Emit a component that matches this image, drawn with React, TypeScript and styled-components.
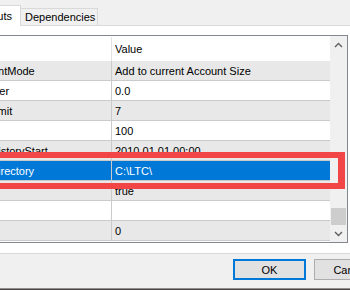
import React from "react";
import styled, { createGlobalStyle, css } from "styled-components";

const GlobalStyle = createGlobalStyle`
  html, body { margin: 0; padding: 0; background: #f0f0f0; }
  body {
    font-family: "Liberation Sans", Arial, sans-serif;
    font-size: 11px;
    color: #000;
  }
`;

const Window = styled.div`
  position: relative;
  width: 350px;
  height: 290px;
  overflow: hidden;
  background: #f0f0f0;
  display: flex;
  flex-direction: column;
`;

const TabStrip = styled.div`
  display: flex;
  align-items: flex-end;
  height: 25px;
  margin-left: -27px;
  flex-shrink: 0;
`;

const Tab = styled.div<{ $active?: boolean }>`
  box-sizing: border-box;
  display: flex;
  align-items: center;
  border: 1px solid #d9d9d9;
  border-bottom: none;
  white-space: nowrap;
  line-height: 1;
  ${(p) =>
    p.$active
      ? css`
          width: 48px;
          height: 21px;
          justify-content: center;
          background: #fff;
          position: relative;
          z-index: 1;
          margin-bottom: -1px;
        `
      : css`
          width: 78px;
          height: 17px;
          padding-left: 4px;
          background: #f0f0f0;
          margin-left: -1px;
        `}
`;

const Panel = styled.div`
  box-sizing: border-box;
  height: 229px;
  margin: 0 -1px 0 -96px;
  border: 1px solid #d9d9d9;
  background: #fff;
  padding: 9px 2px 10px 0;
  flex-shrink: 0;
`;

const Grid = styled.div`
  box-sizing: border-box;
  height: 208px;
  border: 1px solid #828790;
  display: flex;
`;

const TableArea = styled.div`
  flex: 1;
  background: #fff;
  overflow: hidden;
`;

const HeaderRow = styled.div`
  display: grid;
  grid-template-columns: 206px 1fr;
  height: 25px;
  background: #fff;
`;

const HeaderCell = styled.div<{ $first?: boolean }>`
  display: flex;
  align-items: center;
  padding-left: ${(p) => (p.$first ? "4px" : "3px")};
  margin-top: 1px;
  ${(p) => p.$first && css`border-right: 1px solid #e3e3e3;`}
`;

const Row = styled.div<{ $alt?: boolean; $selected?: boolean }>`
  box-sizing: border-box;
  display: grid;
  grid-template-columns: 206px 1fr;
  height: 20px;
  border-bottom: 1px solid #cacaca;
  background: ${(p) => (p.$selected ? "#0078d7" : p.$alt ? "#e8e8e8" : "#fff")};
  color: ${(p) => (p.$selected ? "#fff" : "#000")};
`;

const Cell = styled.div<{ $first?: boolean }>`
  display: flex;
  align-items: center;
  white-space: nowrap;
  overflow: hidden;
  padding-left: ${(p) => (p.$first ? "4px" : "3px")};
  ${(p) => p.$first && css`border-right: 1px solid #cacaca;`}
`;

const ScrollBar = styled.div`
  width: 17px;
  background: #f0f0f0;
  display: flex;
  flex-direction: column;
  flex-shrink: 0;
`;

const ArrowButton = styled.div`
  height: 17px;
  display: flex;
  align-items: center;
  justify-content: center;
  flex-shrink: 0;
`;

const Track = styled.div`
  flex: 1;
  display: flex;
  flex-direction: column;
  justify-content: flex-end;
`;

const Thumb = styled.div`
  height: 17px;
  margin: 0 1px;
  background: #cdcdcd;
`;

const Footer = styled.div`
  box-sizing: border-box;
  height: 34px;
  display: flex;
  gap: 8px;
  padding: 5px 0 0 233px;
  flex-shrink: 0;
`;

const Button = styled.div<{ $default?: boolean }>`
  box-sizing: border-box;
  width: 73px;
  height: 21px;
  flex-shrink: 0;
  display: flex;
  align-items: center;
  justify-content: center;
  background: #e1e1e1;
  border: ${(p) => (p.$default ? "2px solid #0078d7" : "1px solid #adadad")};
`;

const BottomStrip = styled.div`
  height: 2px;
  flex-shrink: 0;
  background: #4a4744;
  border-top: 1px solid #8e8e8e;
  box-sizing: border-box;
`;

const Highlight = styled.div`
  position: absolute;
  left: -20px;
  top: 152px;
  width: 365px;
  height: 37px;
  box-sizing: border-box;
  border-style: solid;
  border-color: #f24646;
  border-width: 6px 7px 6px 6px;
  pointer-events: none;
`;

const Chevron = ({ up }: { up?: boolean }) => (
  <svg width="9" height="6" viewBox="0 0 9 6">
    <polyline
      points={up ? "1,5 4.5,1.5 8,5" : "1,1 4.5,4.5 8,1"}
      fill="none"
      stroke="#606060"
      strokeWidth="1.4"
    />
  </svg>
);

const rows = [
  { name: "MoneyManagementMode", value: "Add to current Account Size" },
  { name: "AccountLotMultiplier", value: "0.0" },
  { name: "MaxDailyTradesLimit", value: "7" },
  { name: "MagicNumber", value: "100" },
  { name: "ExportTicksDataHistoryStart", value: "2010.01.01 00:00" },
  { name: "DataExportBaseDirectory", value: "C:\\LTC\\", selected: true },
  { name: "UseTickData", value: "true" },
  { name: "Comment", value: "" },
  { name: "Slippage", value: "0" },
];

export default function App() {
  return (
    <>
      <GlobalStyle />
      <Window>
        <TabStrip>
          <Tab $active>Inputs</Tab>
          <Tab>Dependencies</Tab>
        </TabStrip>
        <Panel>
          <Grid>
            <TableArea>
              <HeaderRow>
                <HeaderCell $first>Variable</HeaderCell>
                <HeaderCell>Value</HeaderCell>
              </HeaderRow>
              {rows.map((r, i) => (
                <Row key={r.name} $alt={i % 2 === 0} $selected={r.selected}>
                  <Cell $first>{r.name}</Cell>
                  <Cell>{r.value}</Cell>
                </Row>
              ))}
            </TableArea>
            <ScrollBar>
              <ArrowButton>
                <Chevron up />
              </ArrowButton>
              <Track>
                <Thumb />
              </Track>
              <ArrowButton>
                <Chevron />
              </ArrowButton>
            </ScrollBar>
          </Grid>
        </Panel>
        <Footer>
          <Button $default>OK</Button>
          <Button>Cancel</Button>
        </Footer>
        <BottomStrip />
        <Highlight />
      </Window>
    </>
  );
}
